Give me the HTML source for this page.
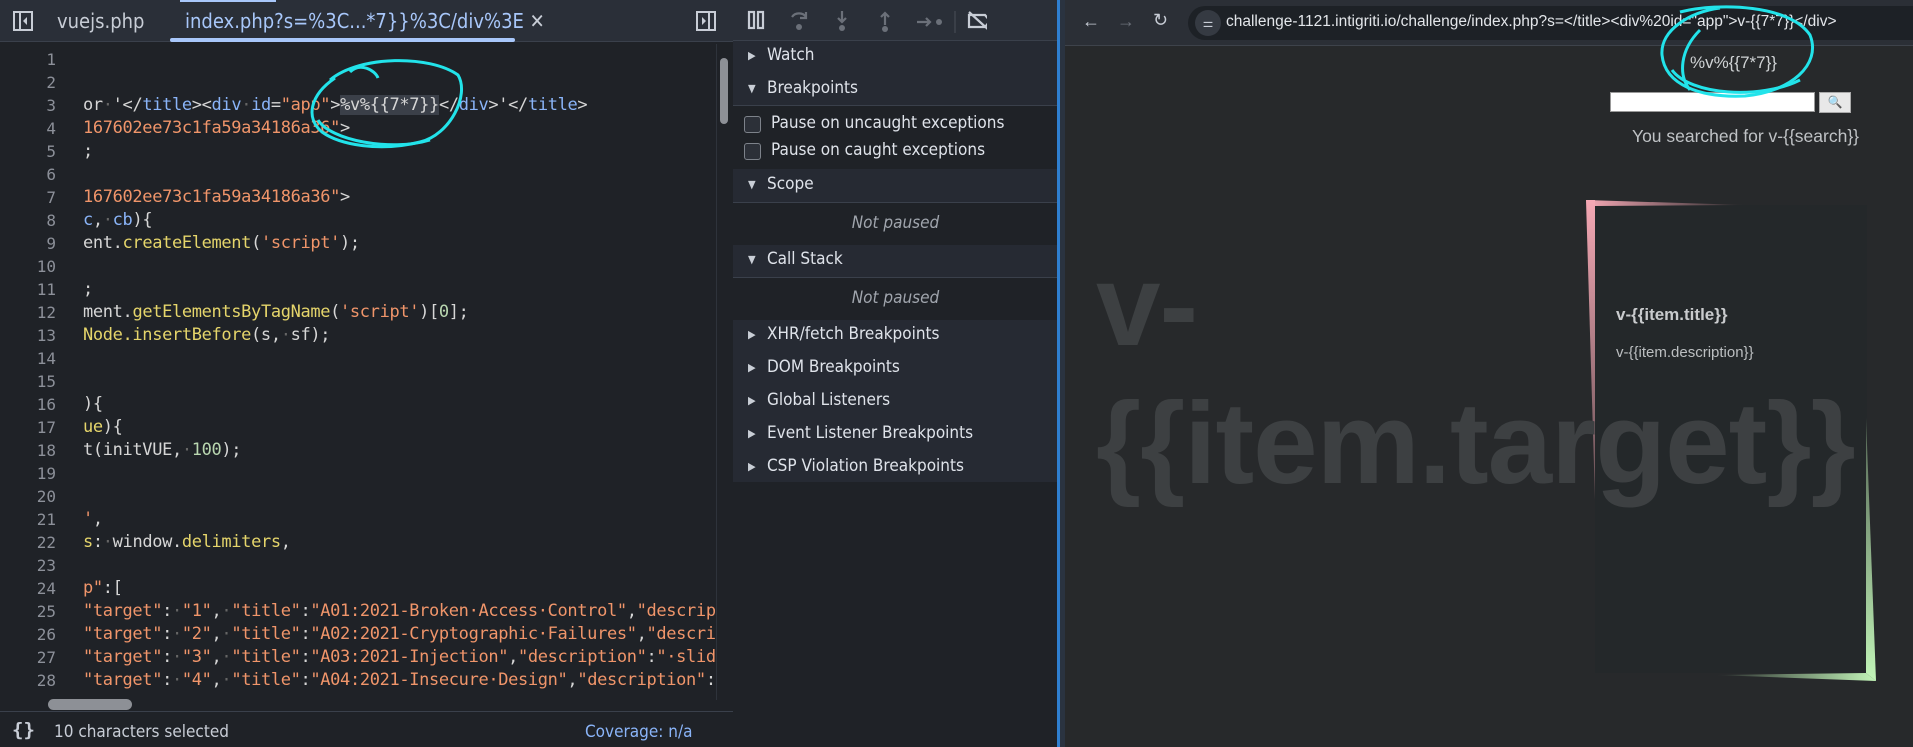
<!DOCTYPE html>
<html><head><meta charset="utf-8"><style>
*{margin:0;padding:0;box-sizing:border-box}
body{width:1913px;height:747px;overflow:hidden;background:#1f2227;font-family:"Liberation Sans",sans-serif;position:relative}
.abs{position:absolute}
#left{left:0;top:0;width:733px;height:747px;background:#1f2227}
#tabs{left:0;top:0;width:733px;height:42px;background:#2a2f38;border-bottom:1px solid #3a404b}
.tab{top:9px;font-size:20px;color:#c8cdd6;font-family:"DejaVu Sans Condensed","Liberation Sans Narrow","Liberation Sans",sans-serif}
.code{font-family:"DejaVu Sans Mono","Liberation Mono",monospace;font-size:17px;white-space:pre;color:#d6d6d6;letter-spacing:-0.35px}
.ln{position:absolute;right:0;width:56px;text-align:right;color:#8c9099;font-family:"DejaVu Sans Mono",monospace;font-size:16px}
.s{color:#f0956a}.t{color:#8ab4f8}.y{color:#e5d56b}.d{color:#666}.n{color:#b9d7b0}
#mid{left:733px;top:0;width:325px;height:747px;background:#1f2227}
#mtool{left:0;top:0;width:325px;height:41px;background:#2a2f38;border-bottom:1px solid #3a404b}
.sec{position:absolute;left:0;width:325px;font-size:17px;color:#dfe3ea;font-family:"DejaVu Sans Condensed","Liberation Sans",sans-serif}
.tri{position:absolute;left:15px;font-size:11px;color:#c9ced6}
#right{left:1065px;top:0;width:848px;height:747px;background:#27292b}
</style></head><body>
<div id="left" class="abs">
 <div id="tabs" class="abs">
  <svg class="abs" style="left:13px;top:11px" width="20" height="20"><rect x="1" y="1" width="18" height="18" fill="none" stroke="#c8cdd6" stroke-width="2"/><line x1="7" y1="1" x2="7" y2="19" stroke="#c8cdd6" stroke-width="2"/><path d="M14 6 L10 10 L14 14Z" fill="#c8cdd6"/></svg>
  <div class="abs tab" style="left:57px">vuejs.php</div>
  <div class="abs tab" style="left:185px;color:#a8c7fa">index.php?s=%3C...*7}}%3C/div%3E <span style="color:#c8cdd6">✕</span></div>
  <div class="abs" style="left:170px;top:38px;width:345px;height:4px;background:#a8c7fa;border-radius:2px"></div>
  <div class="abs" style="left:180px;top:0;width:96px;height:2px;background:#a8c7fa"></div>
  <svg class="abs" style="left:696px;top:11px" width="20" height="20"><rect x="1" y="1" width="18" height="18" fill="none" stroke="#c8cdd6" stroke-width="2"/><line x1="13" y1="1" x2="13" y2="19" stroke="#c8cdd6" stroke-width="2"/><path d="M6 6 L10 10 L6 14Z" fill="#c8cdd6"/></svg>
 </div>
 <div class="abs" style="left:0;top:48px;width:720px;height:648px">
  <div class="ln" style="left:0;top:0;line-height:23px;width:56px">1<br>2<br>3<br>4<br>5<br>6<br>7<br>8<br>9<br>10<br>11<br>12<br>13<br>14<br>15<br>16<br>17<br>18<br>19<br>20<br>21<br>22<br>23<br>24<br>25<br>26<br>27<br>28</div>
  <div class="abs code" style="left:83px;top:0;line-height:23px;width:632px;overflow:hidden">

or<span class="d">·</span>'&lt;/<span class="t">title</span>&gt;&lt;<span class="t">div</span><span class="d">·</span><span class="t">id</span>=<span class="s">"app"</span>&gt;<span style="background:#3b4049">%v%{{7*7}}</span>&lt;/<span class="t">div</span>&gt;'&lt;/<span class="t">title</span>&gt;
<span class="s">167602ee73c1fa59a34186a36"</span>&gt;
;

<span class="s">167602ee73c1fa59a34186a36"</span>&gt;
<span class="t">c</span>,<span class="d">·</span><span class="t">cb</span>){
ent.<span class="y">createElement</span>(<span class="s">'script'</span>);

;
ment.<span class="y">getElementsByTagName</span>(<span class="s">'script'</span>)[<span class="n">0</span>];
<span class="y">Node.insertBefore</span>(s,<span class="d">·</span>sf);


){
<span class="y">ue</span>){
t(initVUE,<span class="d">·</span><span class="n">100</span>);


<span class="s">'</span>,
<span class="y">s</span>:<span class="d">·</span>window.<span class="y">delimiters</span>,

<span class="s">p"</span>:[
<span class="s">"target"</span>:<span class="d">·</span><span class="s">"1"</span>,<span class="d">·</span><span class="s">"title"</span>:<span class="s">"A01:2021-Broken·Access·Control"</span>,<span class="s">"description"</span>
<span class="s">"target"</span>:<span class="d">·</span><span class="s">"2"</span>,<span class="d">·</span><span class="s">"title"</span>:<span class="s">"A02:2021-Cryptographic·Failures"</span>,<span class="s">"description"</span>
<span class="s">"target"</span>:<span class="d">·</span><span class="s">"3"</span>,<span class="d">·</span><span class="s">"title"</span>:<span class="s">"A03:2021-Injection"</span>,<span class="s">"description"</span>:<span class="s">"·slides"</span>
<span class="s">"target"</span>:<span class="d">·</span><span class="s">"4"</span>,<span class="d">·</span><span class="s">"title"</span>:<span class="s">"A04:2021-Insecure·Design"</span>,<span class="s">"description"</span>:</div>
 </div>
 <div class="abs" style="left:716px;top:44px;width:17px;height:656px;background:#1f2227;border-left:1px solid #2e333b"></div>
 <div class="abs" style="left:720px;top:58px;width:8px;height:66px;background:#8d9096;border-radius:4px"></div>
 <div class="abs" style="left:48px;top:699px;width:84px;height:11px;background:#8d9096;border-radius:6px"></div>
 <div class="abs" style="left:0;top:711px;width:733px;height:36px;background:#1f2227;border-top:1px solid #3a404b"></div>
 <div class="abs" style="left:12px;top:719px;font-size:19px;color:#c8cdd6;font-family:'DejaVu Sans Mono',monospace;font-weight:bold">{}</div>
 <div class="abs" style="left:54px;top:722px;font-size:17px;color:#c8cdd6;font-family:'DejaVu Sans Condensed',sans-serif">10 characters selected</div>
 <div class="abs" style="left:585px;top:722px;font-size:17px;color:#8ab4f8;font-family:'DejaVu Sans Condensed',sans-serif">Coverage: n/a</div>
</div>

<div id="mid" class="abs">
 <div id="mtool" class="abs">
  <svg class="abs" style="left:14px;top:9px" width="240" height="24" fill="none" stroke-width="2.2">
   <rect x="2" y="3" width="5" height="16" stroke="#c8cdd6"/><rect x="11" y="3" width="5" height="16" stroke="#c8cdd6"/>
   <path d="M45 8 a8 7 0 0 1 14 0 M59 3 v6 h-6" stroke="#6b7079"/><circle cx="52" cy="18" r="3" fill="#6b7079" stroke="none"/>
   <path d="M95 2 v11 M91 9 l4 4 4-4" stroke="#6b7079"/><circle cx="95" cy="19" r="3" fill="#6b7079" stroke="none"/>
   <path d="M138 16 v-12 M134 8 l4-4 4 4" stroke="#6b7079"/><circle cx="138" cy="20" r="3" fill="#6b7079" stroke="none"/>
   <path d="M170 13 h13 M179 9 l4 4-4 4" stroke="#6b7079"/><circle cx="192" cy="13" r="3" fill="#6b7079" stroke="none"/>
   <line x1="208" y1="2" x2="208" y2="24" stroke="#4a4f58" stroke-width="1"/>
   <path d="M222 6 h16 l5 6-5 6 h-16z M222 3 l22 20" stroke="#c8cdd6"/>
  </svg>
 </div>
 <div class="abs" style="left:0;top:41px;width:325px;height:441px;background:#262a33"></div>
 <div class="sec" style="top:45px"><span class="tri" style="top:4px">▶</span><span style="margin-left:34px">Watch</span></div>
 <div class="sec" style="top:78px;height:28px;border-bottom:1px solid #3a404b"><span class="tri" style="top:4px">▼</span><span style="margin-left:34px">Breakpoints</span></div>
 <div class="abs" style="left:0;top:106px;width:325px;height:63px;background:#1f2227"></div>
 <div class="abs" style="left:11px;top:116px;width:17px;height:17px;border:1.5px solid #7d828a;border-radius:3px;background:#2c3038"></div>
 <div class="sec" style="top:113px;left:38px;width:290px">Pause on uncaught exceptions</div>
 <div class="abs" style="left:11px;top:143px;width:17px;height:17px;border:1.5px solid #7d828a;border-radius:3px;background:#2c3038"></div>
 <div class="sec" style="top:140px;left:38px;width:290px">Pause on caught exceptions</div>
 <div class="sec" style="top:174px;height:29px;border-bottom:1px solid #3a404b"><span class="tri" style="top:4px">▼</span><span style="margin-left:34px">Scope</span></div>
 <div class="abs" style="left:0;top:203px;width:325px;height:42px;background:#1f2227"></div>
 <div class="sec" style="top:213px;text-align:center;color:#a0a5ad;font-style:italic;left:0">Not paused</div>
 <div class="sec" style="top:249px;height:29px;border-bottom:1px solid #3a404b"><span class="tri" style="top:4px">▼</span><span style="margin-left:34px">Call Stack</span></div>
 <div class="abs" style="left:0;top:278px;width:325px;height:42px;background:#1f2227"></div>
 <div class="sec" style="top:288px;text-align:center;color:#a0a5ad;font-style:italic;left:0">Not paused</div>
 <div class="sec" style="top:324px"><span class="tri" style="top:4px">▶</span><span style="margin-left:34px">XHR/fetch Breakpoints</span></div>
 <div class="sec" style="top:357px"><span class="tri" style="top:4px">▶</span><span style="margin-left:34px">DOM Breakpoints</span></div>
 <div class="sec" style="top:390px"><span class="tri" style="top:4px">▶</span><span style="margin-left:34px">Global Listeners</span></div>
 <div class="sec" style="top:423px"><span class="tri" style="top:4px">▶</span><span style="margin-left:34px">Event Listener Breakpoints</span></div>
 <div class="sec" style="top:456px"><span class="tri" style="top:4px">▶</span><span style="margin-left:34px">CSP Violation Breakpoints</span></div>
</div>
<div class="abs" style="left:1057px;top:0;width:3px;height:747px;background:#2f7fd0"></div>
<div class="abs" style="left:1060px;top:0;width:5px;height:747px;background:#2a3340"></div>

<div id="right" class="abs">
 <div class="abs" style="left:0;top:0;width:848px;height:46px;background:#2b2f36;border-bottom:1px solid #3e434b"></div>
 <div class="abs" style="left:17px;top:11px;font-size:18px;color:#c8cdd6">←</div>
 <div class="abs" style="left:52px;top:11px;font-size:18px;color:#6b7079">→</div>
 <div class="abs" style="left:88px;top:10px;font-size:18px;color:#c8cdd6">↻</div>
 <div class="abs" style="left:123px;top:6px;width:725px;height:34px;background:#1d2126;border-radius:17px 0 0 17px"></div>
 <div class="abs" style="left:130px;top:10px;width:26px;height:26px;background:#353a42;border-radius:13px;color:#c8cdd6;font-size:12px;text-align:center;line-height:26px">⚌</div>
 <div class="abs" style="left:161px;top:13px;font-size:15.5px;color:#e3e6ea;font-family:'Liberation Sans Narrow','Liberation Sans',sans-serif;white-space:nowrap">challenge-1121.intigriti.io/challenge/index.php?s=&lt;/title&gt;&lt;div%20id="app"&gt;v-{{7*7}}&lt;/div&gt;</div>
 <div class="abs" style="left:625px;top:53px;font-family:'Liberation Sans Narrow',sans-serif;font-size:17px;color:#cfd2d4">%v%{{7*7}}</div>
 <div class="abs" style="left:545px;top:92px;width:205px;height:20px;background:#fff;border:1px solid #999"></div>
 <div class="abs" style="left:754px;top:92px;width:32px;height:21px;background:#e8e8e8;border:1px solid #aaa;font-size:12px;text-align:center;line-height:19px">🔍</div>
 <div class="abs" style="left:567px;top:126px;color:#bfc2c5;font-family:'Liberation Sans Narrow','Liberation Sans',sans-serif;font-size:17.5px">You searched for v-{{search}}</div>
 <div class="abs" style="left:530px;top:205px;width:272px;height:468px;background:#24282a"></div>
 <svg class="abs" style="left:0;top:0" width="848" height="747">
  <defs><linearGradient id="pk" x1="0" y1="0" x2="1" y2="0"><stop offset="0" stop-color="#f5a8b4"/><stop offset="1" stop-color="#f5a8b4" stop-opacity="0"/></linearGradient>
  <linearGradient id="gr" x1="1" y1="0" x2="0" y2="0"><stop offset="0" stop-color="#c2f5b8"/><stop offset="1" stop-color="#c2f5b8" stop-opacity="0"/></linearGradient>
  <linearGradient id="pkv" x1="0" y1="0" x2="0" y2="1"><stop offset="0" stop-color="#f5a8b4"/><stop offset="1" stop-color="#f5a8b4" stop-opacity="0.3"/></linearGradient>
  <linearGradient id="grv" x1="0" y1="1" x2="0" y2="0"><stop offset="0" stop-color="#c2f5b8"/><stop offset="1" stop-color="#c2f5b8" stop-opacity="0.3"/></linearGradient></defs>
  <polygon points="521,200 530,200 530,500" fill="url(#pkv)"/>
  <polygon points="521,200 680,205 530,206" fill="url(#pk)"/>
  <polygon points="801,418 811,681 801,673" fill="url(#grv)"/>
  <polygon points="650,675 811,681 801,673" fill="url(#gr)"/>
 </svg>
 <div class="abs" style="left:31px;top:236px;font-size:116px;font-weight:bold;color:#3d4042;line-height:138px;white-space:nowrap;letter-spacing:-1px">v-<br>{{item.target}}</div>
 <div class="abs" style="left:551px;top:305px;font-size:17px;font-weight:bold;color:#c9cbcd">v-{{item.title}}</div>
 <div class="abs" style="left:551px;top:344px;font-size:15px;color:#bcbfc1">v-{{item.description}}</div>
</div>

<svg class="abs" style="left:0;top:0;pointer-events:none" width="1913" height="747" fill="none" stroke="#22e3ea" stroke-width="3">
 <path d="M330 80 C360 55 430 55 458 75 C470 95 450 135 420 142 C380 152 340 145 322 132 C305 118 310 95 335 78 M350 72 C360 62 375 70 378 78"/>
 <path d="M318 120 C330 140 390 152 430 140"/>
 <path d="M1680 12 C1720 2 1790 5 1810 35 C1822 65 1790 92 1745 96 C1700 98 1665 85 1662 55 C1660 30 1690 12 1720 8"/>
 <path d="M1672 70 C1690 95 1760 100 1800 80 M1700 30 C1680 50 1678 75 1690 90"/>
</svg>
</body></html>
